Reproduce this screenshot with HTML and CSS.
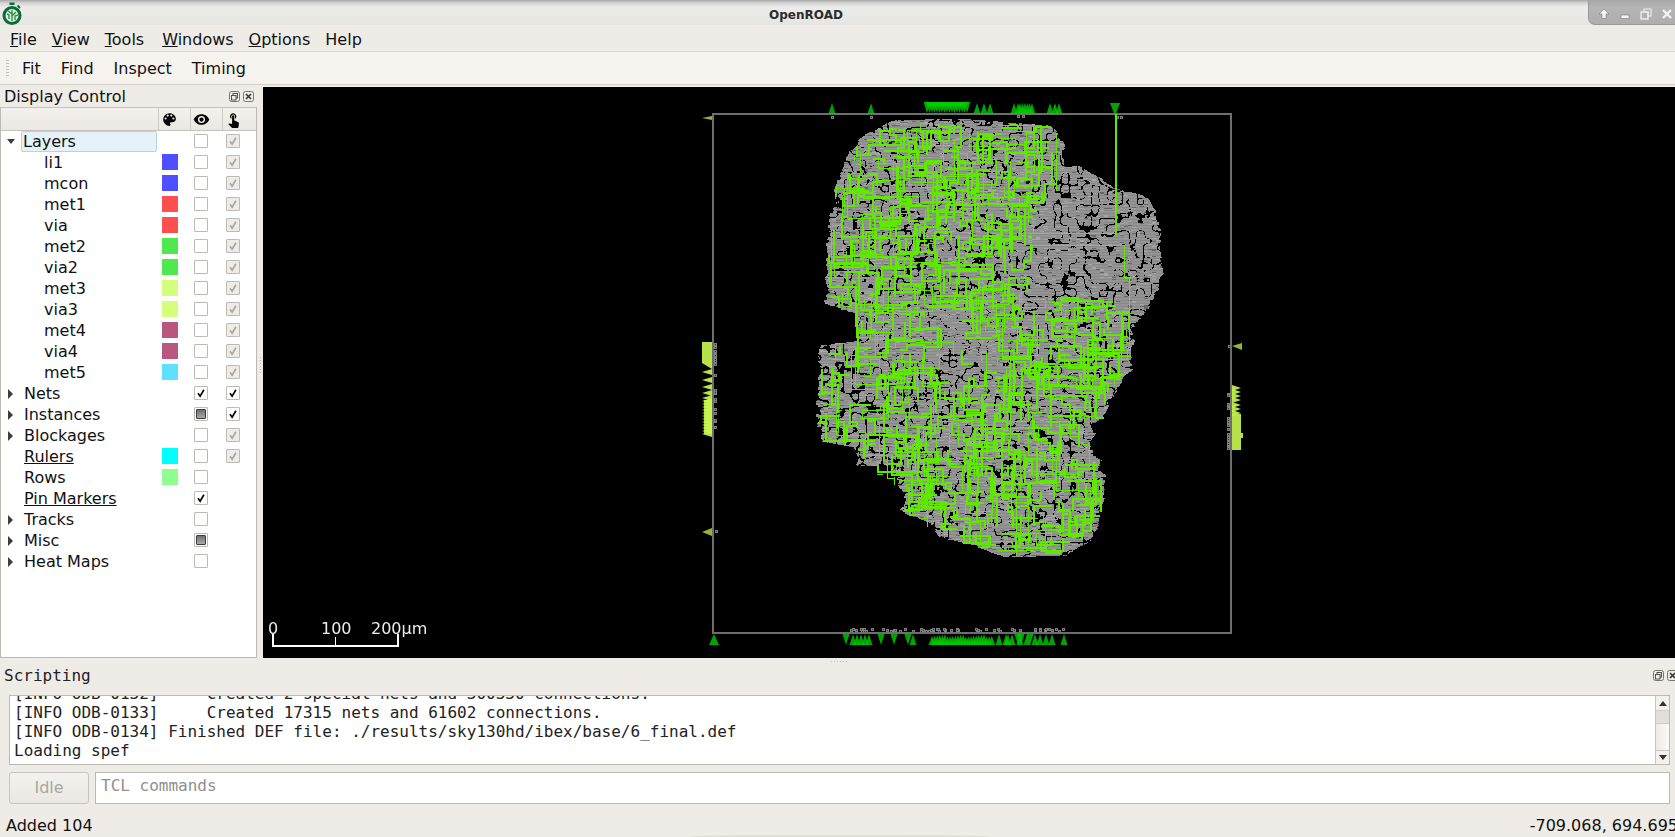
FILE: index.html
```html
<!DOCTYPE html>
<html lang="en">
<head>
<meta charset="utf-8">
<title>OpenROAD</title>
<link rel="stylesheet" href="styles.css">
</head>
<body>
<svg class="defs" width="0" height="0" aria-hidden="true">
  <symbol id="check" viewBox="0 0 14 14"><path d="M3.5 7.2 L6 10.8 L10.4 3.2" fill="none" stroke="currentColor" stroke-width="1.9"/></symbol>
  <symbol id="float" viewBox="0 0 11 11"><rect x=".5" y=".5" width="10" height="10" rx="2" fill="none" stroke="#77756f"/><rect x="4" y="2.5" width="4.5" height="4.5" fill="none" stroke="#55534f"/><rect x="2.5" y="4.5" width="4.5" height="4.5" fill="#efece7" stroke="#55534f"/></symbol>
  <symbol id="close" viewBox="0 0 11 11"><rect x=".5" y=".5" width="10" height="10" rx="2" fill="none" stroke="#77756f"/><path d="M3 3 L8 8 M8 3 L3 8" stroke="#3a3936" stroke-width="1.7"/></symbol>
</svg>
<div class="app">
  <header class="titlebar">
    <svg class="logo" viewBox="0 0 20 24">
      <rect x="7.5" y="0.5" width="5" height="2.5" fill="#0f6a38"/>
      <path d="M15.5 3.5 L18 6" stroke="#0f6a38" stroke-width="2"/>
      <circle cx="10" cy="13.5" r="8" fill="#dfeee2" stroke="#0f6a38" stroke-width="3"/>
      <path d="M10 19 V8 M10 12 L6 9 M10 14 L14 10 M7 17 V13 L5 12 M13 18 V14 L16 13" stroke="#2f8f50" stroke-width="1.4" fill="none"/>
    </svg>
    <span class="title">OpenROAD</span>
    <div class="wm">
      <svg class="wm-icon" viewBox="0 0 12 12"><path d="M6 1 L11 6 H8 V10.5 H4 V6 H1 Z" fill="#f4f4f4" stroke="#777" stroke-width=".6"/></svg>
      <svg class="wm-icon" viewBox="0 0 12 12"><rect x="2" y="7" width="8" height="3.5" fill="#f4f4f4" stroke="#777" stroke-width=".6"/></svg>
      <svg class="wm-icon" viewBox="0 0 12 12"><path d="M4 1 H11 V8 H8 V4 H4 Z" fill="none" stroke="#eee" stroke-width="1.2"/><rect x="1" y="4" width="7" height="7" fill="none" stroke="#eee" stroke-width="1.4"/></svg>
      <svg class="wm-icon" viewBox="0 0 12 12"><path d="M2 2 L10 10 M10 2 L2 10" stroke="#f4f4f4" stroke-width="2.4"/></svg>
    </div>
  </header>

  <nav class="menubar">
    <span class="menu"><u>F</u>ile</span>
    <span class="menu"><u>V</u>iew</span>
    <span class="menu menu-tools"><u>T</u>ools</span>
    <span class="menu"><u>W</u>indows</span>
    <span class="menu"><u>O</u>ptions</span>
    <span class="menu">Help</span>
  </nav>

  <div class="toolbar">
    <span class="grip"></span>
    <span class="tool">Fit</span>
    <span class="tool">Find</span>
    <span class="tool">Inspect</span>
    <span class="tool">Timing</span>
  </div>

  <main class="workspace">
    <aside class="dock">
      <div class="dock-title">
        <span>Display Control</span>
        <span class="dock-buttons">
          <svg class="dock-btn"><use href="#float"/></svg>
          <svg class="dock-btn"><use href="#close"/></svg>
        </span>
      </div>
      <div class="tree">
        <div class="row head">
          <span class="hcell"></span>
          <span class="hcell"><svg class="hicon" viewBox="0 0 24 24"><path d="M12 3a9 9 0 0 0 0 18c.83 0 1.5-.67 1.5-1.5 0-.39-.15-.74-.39-1.01-.23-.26-.38-.61-.38-.99 0-.83.67-1.5 1.5-1.5H16c2.76 0 5-2.24 5-5 0-4.42-4.03-8-9-8zm-5.5 9a1.5 1.5 0 1 1 0-3 1.5 1.5 0 0 1 0 3zm3-4a1.5 1.5 0 1 1 0-3 1.5 1.5 0 0 1 0 3zm5 0a1.5 1.5 0 1 1 0-3 1.5 1.5 0 0 1 0 3zm3 4a1.5 1.5 0 1 1 0-3 1.5 1.5 0 0 1 0 3z"/></svg></span>
          <span class="hcell"><svg class="hicon" viewBox="0 0 24 24"><path d="M12 4.5C7 4.5 2.73 7.61 1 12c1.73 4.39 6 7.5 11 7.5s9.27-3.11 11-7.5c-1.73-4.39-6-7.5-11-7.5zM12 17a5 5 0 1 1 0-10 5 5 0 0 1 0 10zm0-8a3 3 0 1 0 0 6 3 3 0 0 0 0-6z"/></svg></span>
          <span class="hcell"><svg class="hicon" viewBox="0 0 24 24"><path d="M9 11.24V7.5a2.5 2.5 0 0 1 5 0v3.74c1.21-.81 2-2.18 2-3.74C16 5.01 13.99 3 11.5 3S7 5.01 7 7.5c0 1.56.79 2.93 2 3.74zm9.84 4.63l-4.54-2.26c-.17-.07-.35-.11-.54-.11H13v-6c0-.83-.67-1.5-1.5-1.5S10 6.67 10 7.5v10.74l-3.43-.72c-.08-.01-.15-.03-.24-.03-.31 0-.59.13-.79.33l-.79.8 4.94 4.94c.27.27.65.44 1.06.44h6.79c.75 0 1.33-.55 1.44-1.28l.75-5.27c.01-.07.02-.14.02-.2 0-.62-.38-1.16-.91-1.38z"/></svg></span>
        </div>

        <div class="row"><span class="name"><i class="arrow open"></i><span class="label selected">Layers</span></span><span></span><span class="cb"></span><span class="cb dis"><svg><use href="#check"/></svg></span></div>
        <div class="row"><span class="name child">li1</span><span class="sw c-blue"></span><span class="cb"></span><span class="cb dis"><svg><use href="#check"/></svg></span></div>
        <div class="row"><span class="name child">mcon</span><span class="sw c-blue"></span><span class="cb"></span><span class="cb dis"><svg><use href="#check"/></svg></span></div>
        <div class="row"><span class="name child">met1</span><span class="sw c-red"></span><span class="cb"></span><span class="cb dis"><svg><use href="#check"/></svg></span></div>
        <div class="row"><span class="name child">via</span><span class="sw c-red"></span><span class="cb"></span><span class="cb dis"><svg><use href="#check"/></svg></span></div>
        <div class="row"><span class="name child">met2</span><span class="sw c-green"></span><span class="cb"></span><span class="cb dis"><svg><use href="#check"/></svg></span></div>
        <div class="row"><span class="name child">via2</span><span class="sw c-green"></span><span class="cb"></span><span class="cb dis"><svg><use href="#check"/></svg></span></div>
        <div class="row"><span class="name child">met3</span><span class="sw c-lime"></span><span class="cb"></span><span class="cb dis"><svg><use href="#check"/></svg></span></div>
        <div class="row"><span class="name child">via3</span><span class="sw c-lime"></span><span class="cb"></span><span class="cb dis"><svg><use href="#check"/></svg></span></div>
        <div class="row"><span class="name child">met4</span><span class="sw c-rose"></span><span class="cb"></span><span class="cb dis"><svg><use href="#check"/></svg></span></div>
        <div class="row"><span class="name child">via4</span><span class="sw c-rose"></span><span class="cb"></span><span class="cb dis"><svg><use href="#check"/></svg></span></div>
        <div class="row"><span class="name child">met5</span><span class="sw c-sky"></span><span class="cb"></span><span class="cb dis"><svg><use href="#check"/></svg></span></div>
        <div class="row"><span class="name"><i class="arrow"></i><span class="label">Nets</span></span><span></span><span class="cb on"><svg><use href="#check"/></svg></span><span class="cb on"><svg><use href="#check"/></svg></span></div>
        <div class="row"><span class="name"><i class="arrow"></i><span class="label">Instances</span></span><span></span><span class="cb tri"><b></b></span><span class="cb on"><svg><use href="#check"/></svg></span></div>
        <div class="row"><span class="name"><i class="arrow"></i><span class="label">Blockages</span></span><span></span><span class="cb"></span><span class="cb dis"><svg><use href="#check"/></svg></span></div>
        <div class="row"><span class="name"><i class="arrow none"></i><span class="label"><u>Rulers</u></span></span><span class="sw c-cyan"></span><span class="cb"></span><span class="cb dis"><svg><use href="#check"/></svg></span></div>
        <div class="row"><span class="name"><i class="arrow none"></i><span class="label">Rows</span></span><span class="sw c-mint"></span><span class="cb"></span><span></span></div>
        <div class="row"><span class="name"><i class="arrow none"></i><span class="label"><u>Pin Markers</u></span></span><span></span><span class="cb on"><svg><use href="#check"/></svg></span><span></span></div>
        <div class="row"><span class="name"><i class="arrow"></i><span class="label">Tracks</span></span><span></span><span class="cb"></span><span></span></div>
        <div class="row"><span class="name"><i class="arrow"></i><span class="label">Misc</span></span><span></span><span class="cb tri"><b></b></span><span></span></div>
        <div class="row"><span class="name"><i class="arrow"></i><span class="label">Heat Maps</span></span><span></span><span class="cb"></span><span></span></div>
      </div>
    </aside>

    <div class="vsplit"><span class="vdots"></span></div>

    <section class="view">
      <canvas id="layout" width="1412" height="571"></canvas>
      <div class="scale">
        <span class="scale-label s0">0</span>
        <span class="scale-label s1">100</span>
        <span class="scale-label s2">200µm</span>
        <span class="scale-line"></span>
        <span class="tick t0"></span>
        <span class="tick t1"></span>
        <span class="tick t2"></span>
      </div>
    </section>
  </main>

  <div class="hsplit"><span class="hdots"></span></div>

  <section class="scripting">
    <div class="dock-title script-title">
      <span>Scripting</span>
      <span class="dock-buttons">
        <svg class="dock-btn"><use href="#float"/></svg>
        <svg class="dock-btn"><use href="#close"/></svg>
      </span>
    </div>
    <div class="log">
      <div class="log-text">
        <div class="log-line">[INFO ODB-0132]     Created 2 special nets and 300330 connections.</div>
        <div class="log-line">[INFO ODB-0133]     Created 17315 nets and 61602 connections.</div>
        <div class="log-line">[INFO ODB-0134] Finished DEF file: ./results/sky130hd/ibex/base/6_final.def</div>
        <div class="log-line">Loading spef</div>
      </div>
      <div class="scrollbar">
        <span class="sb-btn"><i class="sb-up"></i></span>
        <span class="sb-handle"></span>
        <span class="sb-track"></span>
        <span class="sb-btn sb-btn-down"><i class="sb-down"></i></span>
      </div>
    </div>
    <div class="command">
      <span class="idle">Idle</span>
      <span class="input">TCL commands</span>
    </div>
  </section>

  <footer class="status">
    <span>Added 104</span>
    <span class="coords">-709.068, 694.695</span>
  </footer>
  <div class="bottom-shadow"></div>
</div>
<script src="script.js"></script>
</body>
</html>
```
FILE: styles.css
```css
* { box-sizing: border-box; }
html, body { margin: 0; height: 100%; overflow: hidden; }
body {
  width: 1675px;
  height: 837px;
  background: #efece7;
  color: #111;
  font: 16px/21px "DejaVu Sans", sans-serif;
}
.defs { position: absolute; }
.app { position: relative; display: flex; flex-direction: column; width: 1675px; height: 837px; overflow: hidden; }

.titlebar {
  position: relative;
  height: 25px;
  display: flex;
  align-items: center;
  justify-content: center;
  background: linear-gradient(#a9a9a9 0, #d4d4d4 3px, #ececea 7px, #e6e6e3 24px);
}
.logo { position: absolute; left: 2px; top: 2px; width: 20px; height: 24px; }
.title { font-weight: 700; font-size: 12px; line-height: 15px; color: #2c2c2c; margin-left: -63px; margin-top: 6px; }
.wm {
  position: absolute;
  right: 0;
  top: 0;
  width: 87px;
  height: 25px;
  display: flex;
  align-items: center;
  gap: 9px;
  padding: 4px 0 0 9px;
  background: linear-gradient(#a8a8a8, #b5b5b5 30%, #aeaeae);
  border-left: 1px solid #9a9a9a;
  border-bottom: 1px solid #989898;
  border-bottom-left-radius: 7px;
}
.wm-icon { flex: none; width: 12px; height: 12px; }

.menubar {
  height: 27px;
  display: flex;
  gap: 15px;
  padding: 3px 0 0 10px;
  align-items: center;
  border-bottom: 1px solid #dcd8d2;
}
.menu-tools { margin-right: 3px; }
.toolbar {
  height: 33px;
  display: flex;
  align-items: center;
  gap: 20px;
  padding-left: 6px;
  background: #f6f3ef;
  border-bottom: 1px solid #d3cfc9;
}
.grip {
  width: 3px;
  height: 16px;
  margin-right: -7px;
  background: repeating-linear-gradient(#c4c1bc 0 1px, transparent 1px 3px);
}

.workspace { height: 573px; display: flex; }
.dock { width: 257px; display: flex; flex-direction: column; }
.dock-title {
  height: 22px;
  flex: none;
  display: flex;
  align-items: center;
  justify-content: space-between;
  padding: 0 3px 0 4px;
}
.dock-buttons { display: flex; gap: 3px; }
.dock-btn { width: 11px; height: 11px; }

.tree {
  flex: 1;
  background: #fff;
  border: 1px solid #bcb9b4;
  border-top: 0;
}
.row {
  display: grid;
  grid-template-columns: 158px 32px 32px 33px;
  height: 21px;
  align-items: center;
  justify-items: start;
}
.head {
  height: 24px;
  align-items: stretch;
  justify-items: stretch;
  background: linear-gradient(#f4f1ed, #ebe8e3);
  border-top: 1px solid #c5c2bd;
  border-bottom: 1px solid #c5c2bd;
}
.hcell { display: flex; align-items: center; padding-left: 2px; border-right: 1px solid #cfccc7; }
.hcell:last-child { border-right: 0; }
.hicon { width: 17px; height: 17px; fill: #050505; }

.name { display: flex; align-items: center; white-space: nowrap; }
.child { padding-left: 43px; }
.arrow {
  width: 0;
  height: 0;
  margin: 0 10px 0 7px;
  border-style: solid;
  border-width: 5px 0 5px 5px;
  border-color: transparent transparent transparent #3d3d3d;
}
.arrow.open { margin: 0 6px 0 6px; border-width: 5px 4.5px 0 4.5px; border-color: #3d3d3d transparent transparent transparent; }
.arrow.none { border-color: transparent; }
.label { padding: 0 1px; }
.selected {
  width: 136px;
  height: 21px;
  padding-left: 1px;
  line-height: 19px;
  background: #e6f2f9;
  border: 1px solid #b9d2e2;
  border-radius: 2px;
}

.sw { width: 16px; height: 16px; margin: 0 0 2px 3px; }
.c-blue { background: #4f4fff; }
.c-red { background: #ff4f4f; }
.c-green { background: #4fe84f; }
.c-lime { background: #d4ff7a; }
.c-rose { background: #b8577f; }
.c-sky { background: #5fe0ff; }
.c-cyan { background: #00ffff; }
.c-mint { background: #8fff8f; }

.cb {
  width: 14px;
  height: 14px;
  margin: 0 0 2px 3px;
  display: flex;
  align-items: center;
  justify-content: center;
  background: #fff;
  border: 1px solid #bdbab5;
  border-radius: 1px;
}
.cb svg { width: 12px; height: 12px; }
.on { color: #000; }
.dis { color: #a8a5a0; background: #efece8; }
.tri b {
  width: 10px;
  height: 10px;
  background: linear-gradient(#6f6f6f, #a9a9a9);
  border: 1px solid #3d3d3d;
  border-radius: 1px;
}

.vsplit { width: 6px; display: flex; align-items: center; justify-content: center; }
.vdots { width: 1px; height: 18px; margin-top: -12px; background: repeating-linear-gradient(#bdb9b3 0 1px, transparent 1px 3px); }

.view { position: relative; flex: 1; padding-top: 2px; }
#layout { display: block; background: #000; }

.scale { position: absolute; left: 0; top: 0; color: #ececec; }
.scale-label { position: absolute; top: 534px; line-height: 20px; white-space: nowrap; }
.s0 { left: 5px; }
.s1 { left: 58px; }
.s2 { left: 108px; }
.scale-line { position: absolute; left: 9px; top: 560px; width: 127px; height: 2px; background: #fff; }
.tick { position: absolute; background: #fff; }
.t0 { left: 9px; top: 549px; width: 2px; height: 12px; }
.t1 { left: 72px; top: 552px; width: 1px; height: 9px; }
.t2 { left: 134px; top: 549px; width: 2px; height: 12px; }

.hsplit { height: 7px; display: flex; justify-content: center; align-items: center; }
.hdots { width: 18px; height: 1px; margin-left: 5px; background: repeating-linear-gradient(90deg, #bdb9b3 0 1px, transparent 1px 3px); }

.scripting { height: 145px; display: flex; flex-direction: column; }
.script-title { height: 22px; padding: 0 0 1px 4px; font: 16px/19px "DejaVu Sans Mono", monospace; color: #222; }
.script-title .dock-buttons { margin-right: -3px; }
.log {
  height: 70px;
  margin: 8px 5px 0 9px;
  display: flex;
  background: #fff;
  border: 1px solid #bcb9b4;
  overflow: hidden;
}
.log-text {
  flex: 1;
  margin-top: -12px;
  padding-left: 4px;
  font: 16px/19px "DejaVu Sans Mono", monospace;
  color: #222;
}
.log-line { white-space: pre; height: 19px; }
.scrollbar { width: 14px; flex: none; display: flex; flex-direction: column; border-left: 1px solid #c9c6c1; background: linear-gradient(90deg, #eeebe6, #fbfaf8); }
.sb-btn { height: 14px; flex: none; display: flex; align-items: center; justify-content: center; background: #f4f1ed; }
.sb-btn-down { border-top: 1px solid #c9c6c1; }
.sb-up { border: 4px solid transparent; border-top: 0; border-bottom: 5px solid #333; }
.sb-down { border: 4px solid transparent; border-bottom: 0; border-top: 5px solid #333; }
.sb-handle { height: 14px; flex: none; background: #e2dfda; border-top: 1px solid #cfccc7; border-bottom: 1px solid #cfccc7; }
.sb-track { flex: 1; }

.command { display: flex; gap: 6px; margin: 7px 5px 0 9px; height: 32px; }
.idle {
  width: 80px;
  display: flex;
  align-items: center;
  justify-content: center;
  padding-bottom: 1px;
  color: #a9a6a1;
  background: linear-gradient(#f4f2ee, #ebe8e3);
  border: 1px solid #c8c5c0;
  border-radius: 3px;
}
.input {
  flex: 1;
  padding: 1px 0 0 5px;
  background: #fff;
  border: 1px solid #bcb9b4;
  color: #8f8f8f;
  font: 16px/24px "DejaVu Sans Mono", monospace;
}

.status {
  flex: 1;
  display: flex;
  align-items: center;
  justify-content: space-between;
  padding: 3px 0 0 6px;
}
.coords { margin-right: -3px; white-space: nowrap; }
.bottom-shadow {
  position: absolute;
  left: 690px;
  bottom: 0;
  width: 300px;
  height: 3px;
  background: linear-gradient(#efece7, #dcd9d3);
  border-radius: 50% 50% 0 0 / 100% 100% 0 0;
}
```
FILE: script.js
```js
(function () {
  var canvas = document.getElementById('layout');
  var ctx = canvas.getContext('2d');
  var OX = 263, OY = 87, W = canvas.width, H = canvas.height;

  var seed = 20240611;
  function rnd() {
    seed |= 0; seed = seed + 0x6D2B79F5 | 0;
    var t = Math.imul(seed ^ seed >>> 15, 1 | seed);
    t = t + Math.imul(t ^ t >>> 7, 61 | t) ^ t;
    return ((t ^ t >>> 14) >>> 0) / 4294967296;
  }
  function hash(x, y) {
    var s = Math.sin(x * 127.1 + y * 311.7) * 43758.5453;
    return s - Math.floor(s);
  }
  function noise(x, y) {
    var ix = Math.floor(x), iy = Math.floor(y), fx = x - ix, fy = y - iy;
    fx = fx * fx * (3 - 2 * fx); fy = fy * fy * (3 - 2 * fy);
    var a = hash(ix, iy), b = hash(ix + 1, iy), c = hash(ix, iy + 1), d = hash(ix + 1, iy + 1);
    return a + (b - a) * fx + (c - a) * fy + (a - b - c + d) * fx * fy;
  }

  var BLOB = [[893,120],[960,118],[1050,125],[1062,133],[1063,167],[1077,165],[1113,187],[1140,195],[1153,210],[1158,227],[1163,273],[1153,303],[1140,317],[1128,330],[1133,358],[1122,380],[1113,395],[1103,417],[1093,423],[1093,453],[1103,460],[1102,490],[1100,517],[1093,537],[1070,555],[1010,557],[980,547],[940,537],[930,523],[903,510],[903,493],[897,487],[895,467],[860,465],[857,447],[820,440],[817,413],[820,345],[857,340],[855,333],[853,313],[828,303],[827,277],[828,223],[835,183],[843,163],[855,143]];
  var WIRES = [[893,120],[1050,125],[1056,190],[1035,215],[1030,300],[1040,296],[1128,298],[1133,358],[1113,395],[1103,417],[1093,423],[1093,453],[1103,460],[1100,517],[1093,537],[1070,555],[1010,557],[980,547],[940,537],[903,510],[897,487],[860,465],[857,447],[820,440],[817,413],[820,345],[857,340],[855,333],[853,313],[828,303],[827,277],[828,223],[835,183],[843,163],[855,143]];

  function inside(poly, x, y) {
    var c = false;
    for (var i = 0, j = poly.length - 1; i < poly.length; j = i++) {
      var a = poly[i], b = poly[j];
      if ((a[1] > y) !== (b[1] > y) && x < (b[0] - a[0]) * (y - a[1]) / (b[1] - a[1]) + a[0]) c = !c;
    }
    return c;
  }

  /* cell field */
  var img = ctx.createImageData(W, H), data = img.data;
  for (var p = 3; p < data.length; p += 4) data[p] = 255;
  function put(x, y, v) {
    var xx = x - OX, yy = y - OY;
    if (xx < 0 || yy < 0 || xx >= W || yy >= H) return;
    var i = (yy * W + xx) * 4;
    data[i] = data[i + 1] = data[i + 2] = v;
  }
  for (var y = 115; y < 562; y++) {
    var band = Math.floor(y / 3);
    var jit = (noise(y / 9, 5.5) - 0.5) * 10 + (hash(band, 3) - 0.5) * 3.5;
    for (var x = 805; x < 1175; x++) {
      if (!inside(BLOB, x + jit, y)) continue;
      var n1 = Math.abs(noise(x / 7.5, y / 6.5) - 0.5);
      var n2 = Math.abs(noise(x / 3.2 + 40, y / 2.8 + 9) - 0.5);
      var f = n1 + 0.2 * n2;
      var t = 0.082;
      if (x > 890 && x < 1010 && y > 290 && y < 350) t = 0.045;
      if (x < 890 && y > 345) t = 0.105;
      if (f < t) { put(x, y, 0); continue; }
      var d = hash(Math.floor(x / 4), y);
      var shade = y % 3 === 0 ? 0x88 : 0x94;
      if (d < 0.08) shade = 0xa6;
      else if (d > 0.95) shade = 0x66;
      put(x, y, shade);
    }
  }
  /* cells along the die edge */
  function dots(list) {
    list.forEach(function (q) {
      for (var a = 0; a < 3; a++) for (var b = 0; b < 3; b++) put(q[0] + a, q[1] + b, a === 1 && b === 1 ? 0x30 : 0x80);
    });
  }
  var ds = [[831,116],[870,116],[1017,115],[1022,115],[1116,116],[1120,116]];
  for (var i = 0; i < 62; i++) ds.push([846 + Math.floor(rnd() * 222), 628 + Math.floor(rnd() * 3)]);
  for (i = 0; i < 24; i++) ds.push([714, 342 + Math.floor(rnd() * 92)]);
  ds.push([715, 530]);
  for (i = 0; i < 22; i++) ds.push([1227, 386 + Math.floor(rnd() * 62)]);
  ds.push([1228, 345]);
  dots(ds);
  ctx.putImageData(img, 0, 0);

  /* die boundary */
  ctx.translate(-OX, -OY);
  ctx.fillStyle = '#6e6e6e';
  ctx.fillRect(712, 113, 519, 2);
  ctx.fillRect(712, 632, 519, 2);
  ctx.fillRect(712, 113, 2, 521);
  ctx.fillRect(1230, 113, 2, 521);

  /* routing */
  function seg(x1, y1, x2, y2, w) {
    var a = Math.min(x1, x2), b = Math.min(y1, y2);
    ctx.fillRect(a, b, Math.abs(x2 - x1) + w, Math.abs(y2 - y1) + w);
  }
  function sparse(x, y) {
    var d1 = Math.hypot(x - 968, y - 345), d2 = Math.hypot(x - 860, y - 385);
    if (d1 < 42) return 0.85;
    if (d2 < 30) return 0.85;
    return 0;
  }
  ctx.fillStyle = '#5fe800';
  [[1115,114,1115,233,2],[1115,233,1030,233,1],[1030,245,1124,245,1],[1124,245,1124,277,1],[1124,277,1129,277,2],[1129,277,1129,345,1],
   [1060,297,1077,297,2],[1077,297,1077,317,2],[1077,317,1097,317,2],[1002,320,1002,356,1],[1002,356,1030,358,2],[1030,358,1030,366,2],[1030,366,1090,366,1],
   [1010,395,1060,395,1],[1010,395,1010,440,1],[917,430,917,480,2],[960,450,1020,450,1],[1020,450,1020,490,1],[1056,133,1056,190,1],[1016,488,1016,555,1]].forEach(function (s) {
    seg(s[0], s[1], s[2], s[3], s[4]);
  });
  for (var gy = 118; gy < 560; gy += 12) {
    for (var gx = 815; gx < 1135; gx += 12) {
      var px = gx + Math.floor(rnd() * 12), py = gy + Math.floor(rnd() * 12);
      if (!inside(WIRES, px, py)) continue;
      if (rnd() < sparse(px, py)) continue;
      var horiz = rnd() < 0.6, n = 2 + Math.floor(rnd() * 3);
      var w = rnd() < 0.65 ? 2 : 1;
      for (var m = 0; m < n; m++) {
        var len = 5 + Math.floor(rnd() * rnd() * 40), sgn = rnd() < 0.5 ? -1 : 1;
        var qx = horiz ? px + sgn * len : px, qy = horiz ? py : py + sgn * len;
        if (!inside(WIRES, qx, qy) || !inside(WIRES, (px + qx) / 2, (py + qy) / 2)) { horiz = !horiz; continue; }
        seg(px, py, qx, qy, w);
        px = qx; py = qy; horiz = !horiz;
      }
    }
  }

  /* pin markers */
  function tri(ax, ay, bx, by, cx, cy, col) {
    ctx.fillStyle = col;
    ctx.beginPath(); ctx.moveTo(ax, ay); ctx.lineTo(bx, by); ctx.lineTo(cx, cy); ctx.closePath(); ctx.fill();
  }
  var G = 'rgba(0,205,0,0.8)', Y = 'rgba(200,245,80,0.92)';
  function up(x, y) { tri(x, y, x - 3.5, y + 11, x + 3.5, y + 11, G); }
  function down(x, y) { tri(x, y + 11, x - 3.5, y, x + 3.5, y, G); }
  [832, 871, 977, 984, 990, 1014, 1018, 1050, 1055, 1059].forEach(function (x) { up(x, 103); });
  for (var tx = 1020; tx < 1033; tx += 2.4) up(tx, 103);
  for (tx = 927; tx < 968; tx += 2.5) down(tx, 102);
  tri(1115, 116, 1110, 103, 1120, 103, G);
  ctx.fillStyle = G; ctx.fillRect(930, 102, 36, 4);

  tri(714, 634, 709, 645, 719, 645, G);
  [846, 881, 894, 908, 1018, 1021, 1030].forEach(function (x) { down(x, 634); });
  [853, 857, 861, 865, 869, 913, 1008, 1012].forEach(function (x) { tri(x, 634, x - 3.5, 645, x + 3.5, 645, G); });
  for (tx = 932; tx < 992; tx += 2.6) tri(tx, 634 + (tx % 3), tx - 3.5, 645, tx + 3.5, 645, G);
  [999, 1006, 1020, 1027, 1035, 1040, 1046, 1052, 1064].forEach(function (x) { tri(x, 634, x - 3.5, 645, x + 3.5, 645, G); });

  function lp(y) { tri(712, y - 3, 712, y + 3, 702, y, Y); }
  function rp(y) { tri(1232, y - 3, 1232, y + 3, 1241, y, Y); }
  ctx.fillStyle = Y;
  ctx.fillRect(702, 342, 10, 21);
  tri(702, 363, 712, 363, 712, 369, Y);
  [372, 380, 387, 393].forEach(lp);
  ctx.fillRect(704, 400, 8, 34);
  for (var yy2 = 398; yy2 < 436; yy2 += 3) lp(yy2);
  tri(702, 532, 712, 528, 712, 536, 'rgba(170,215,60,.85)');
  tri(702, 118, 712, 116, 712, 120, 'rgba(170,215,60,.85)');
  tri(1242, 343, 1242, 350, 1232, 346, 'rgba(170,215,60,.85)');
  [388, 392, 396, 400, 405, 409, 413].forEach(rp);
  ctx.fillStyle = Y;
  ctx.fillRect(1232, 414, 9, 36);
  ctx.fillRect(1241, 433, 2, 5);
})();
```
